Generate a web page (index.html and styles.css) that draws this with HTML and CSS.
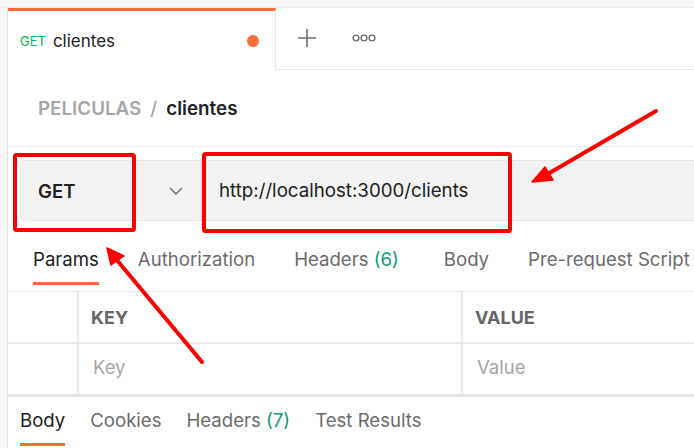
FILE: index.html
```html
<!DOCTYPE html>
<html>
<head>
<meta charset="utf-8">
<link rel="stylesheet" href="styles.css">
</head>
<body>
<div class="topstrip"></div>
<div class="app">
  <div class="sidebar"></div>
  <div class="main">
    <div class="tabbar">
      <div class="tab">
        <span class="tab-method">GET</span>
        <span class="tab-name">clientes</span>
        <span class="dot"></span>
      </div>
      <div class="tabtools">
        <svg class="plus" width="20" height="20" viewBox="0 0 20 20"><path d="M10 1v18M1 10h18" stroke="#6b6b6b" stroke-width="1.6" fill="none"/></svg>
        <svg class="more" width="24" height="10" viewBox="0 0 24 10"><circle cx="4" cy="5" r="2.9" stroke="#6b6b6b" stroke-width="1.4" fill="none"/><circle cx="12" cy="5" r="2.9" stroke="#6b6b6b" stroke-width="1.4" fill="none"/><circle cx="20" cy="5" r="2.9" stroke="#6b6b6b" stroke-width="1.4" fill="none"/></svg>
      </div>
    </div>
    <div class="crumbs">
      <span class="crumb-coll">PELICULAS</span>
      <span class="crumb-sep">/</span>
      <span class="crumb-req">clientes</span>
    </div>
    <div class="reqwrap">
      <div class="reqbar">
        <div class="method">
          <span class="method-name">GET</span>
          <svg class="chev" width="14" height="8" viewBox="0 0 14 8"><path d="M1 1l6 6 6-6" stroke="#6b6b6b" stroke-width="1.4" fill="none"/></svg>
        </div>
        <div class="url">http://localhost:3000/clients</div>
      </div>
    </div>
    <div class="reqtabs">
      <span class="rt active">Params</span>
      <span class="rt">Authorization</span>
      <span class="rt">Headers <span class="count">(6)</span></span>
      <span class="rt rt-body">Body</span>
      <span class="rt">Pre-request Script</span>
    </div>
    <div class="table">
      <div class="trow thead">
        <div class="c0"></div>
        <div class="c1">KEY</div>
        <div class="c2">VALUE</div>
      </div>
      <div class="trow tbody">
        <div class="c0"></div>
        <div class="c1 ph">Key</div>
        <div class="c2 ph">Value</div>
      </div>
    </div>
    <div class="restabs">
      <span class="rs active">Body</span>
      <span class="rs">Cookies</span>
      <span class="rs">Headers <span class="count">(7)</span></span>
      <span class="rs">Test Results</span>
    </div>
  </div>
</div>
<svg class="annot" width="694" height="448" viewBox="0 0 694 448">
  <rect x="15" y="155" width="119" height="75" rx="1.5" fill="none" stroke="#ff0000" stroke-width="4"/>
  <rect x="204" y="154" width="306" height="77" rx="1.5" fill="none" stroke="#ff0000" stroke-width="4"/>
  <line x1="656" y1="111" x2="546" y2="175" stroke="#ff0000" stroke-width="4" stroke-linecap="round"/>
  <polygon points="532,182 545,167 553,180" fill="#ff0000" stroke="#ff0000" stroke-width="1.5" stroke-linejoin="round"/>
  <line x1="202" y1="362" x2="116" y2="259" stroke="#ff0000" stroke-width="4" stroke-linecap="round"/>
  <polygon points="107,248 124,256 111,265" fill="#ff0000" stroke="#ff0000" stroke-width="1.5" stroke-linejoin="round"/>
</svg>
</body>
</html>
```

FILE: styles.css
```css
* { box-sizing: border-box; }
html, body { margin: 0; padding: 0; }
body {
  width: 694px;
  height: 448px;
  overflow: hidden;
  background: #ffffff;
  font-family: Inter, "Noto Sans", sans-serif;
  color: #212121;
  position: relative;
}
.topstrip {
  height: 8px;
  background: #f5f5f5;
  border-bottom: 1px solid #ededed;
}
.app {
  display: flex;
  height: 440px;
}
.sidebar {
  width: 8px;
  flex: none;
  background: #f5f5f5;
  border-right: 1px solid #e6e6e6;
}
.main {
  flex: 1;
  min-width: 0;
  overflow: hidden;
}
.tabbar {
  display: flex;
  height: 62px;
}
.tab {
  width: 268px;
  flex: none;
  display: flex;
  align-items: center;
  border-top: 3px solid #ff6c37;
  border-right: 1px solid #e6e6e6;
  padding-left: 12px;
  background: #fff;
}
.tab-method {
  color: #0cb25a;
  font-size: 13px;
  margin-right: 7px;
}
.tab-name {
  font-size: 17px;
  color: #212121;
}
.dot {
  width: 12px;
  height: 12px;
  border-radius: 50%;
  background: #ff6c37;
  margin-left: auto;
  margin-right: 16px;
}
.tabtools {
  flex: 1;
  display: flex;
  align-items: center;
  border-bottom: 1px solid #e6e6e6;
  padding-left: 21px;
  padding-bottom: 1px;
}
.plus { margin-right: 35px; }
.crumbs {
  height: 77px;
  border-bottom: 1px solid #ebebeb;
  display: flex;
  align-items: center;
  padding-left: 30px;
  font-size: 18.8px;
  font-weight: 600;
}
.crumb-coll { color: #a6a6a6; }
.crumb-sep { color: #a6a6a6; margin: 0 9px; font-weight: 500; }
.crumb-req { color: #212121; }
.reqwrap {
  padding: 13px 0 0 12px;
}
.reqbar {
  height: 61px;
  display: flex;
  background: #f2f2f2;
  border: 1px solid #e6e6e6;
  border-radius: 4px;
  margin-right: -10px;
}
.method {
  width: 180px;
  flex: none;
  display: flex;
  align-items: center;
  padding-left: 17px;
  border-right: 1px solid #e6e6e6;
}
.method-name {
  font-size: 18.6px;
  font-weight: 600;
  color: #212121;
}
.chev { margin-left: auto; margin-right: 17px; }
.url {
  display: flex;
  align-items: center;
  padding-left: 18px;
  font-size: 18.7px;
  color: #212121;
}
.reqtabs {
  height: 71px;
  display: flex;
  align-items: flex-start;
  padding-left: 25px;
  border-bottom: 1px solid #ebebeb;
  white-space: nowrap;
}
.rt {
  font-size: 18.6px;
  color: #6b6b6b;
  padding-top: 27px;
  height: 64px;
  margin-right: 39px;
  border-bottom: 3px solid transparent;
}
.rt.active {
  color: #212121;
  border-bottom-color: #ff6c37;
}
.rt-body { margin-left: 6px; }
.count { color: #0e9c73; }
.table {
  border-bottom: 3px solid #e6e6e6;
}
.trow {
  display: flex;
}
.thead { height: 52px; border-bottom: 2px solid #ebebeb; }
.tbody { height: 50px; }
.c0 {
  width: 71px;
  flex: none;
  border-right: 2px solid #ebebeb;
}
.c1, .c2 {
  display: flex;
  align-items: center;
  font-size: 18.5px;
}
.c1 {
  width: 384px;
  flex: none;
  padding-left: 12px;
  border-right: 2px solid #ebebeb;
}
.c2 { flex: 1; padding-left: 12px; }
.thead .c1, .thead .c2 {
  font-weight: 700;
  color: #666666;
  font-size: 18px;
}
.ph { color: #a6a6a6; padding-left: 14px; padding-bottom: 5px; }
.restabs {
  display: flex;
  padding-left: 12px;
  white-space: nowrap;
}
.rs {
  font-size: 18.6px;
  color: #6b6b6b;
  padding-top: 12px;
  height: 49px;
  margin-right: 25px;
  border-bottom: 3px solid transparent;
}
.rs.active {
  color: #212121;
  border-bottom-color: #ff6c37;
}
.annot {
  position: absolute;
  left: 0;
  top: 0;
  pointer-events: none;
}
```
